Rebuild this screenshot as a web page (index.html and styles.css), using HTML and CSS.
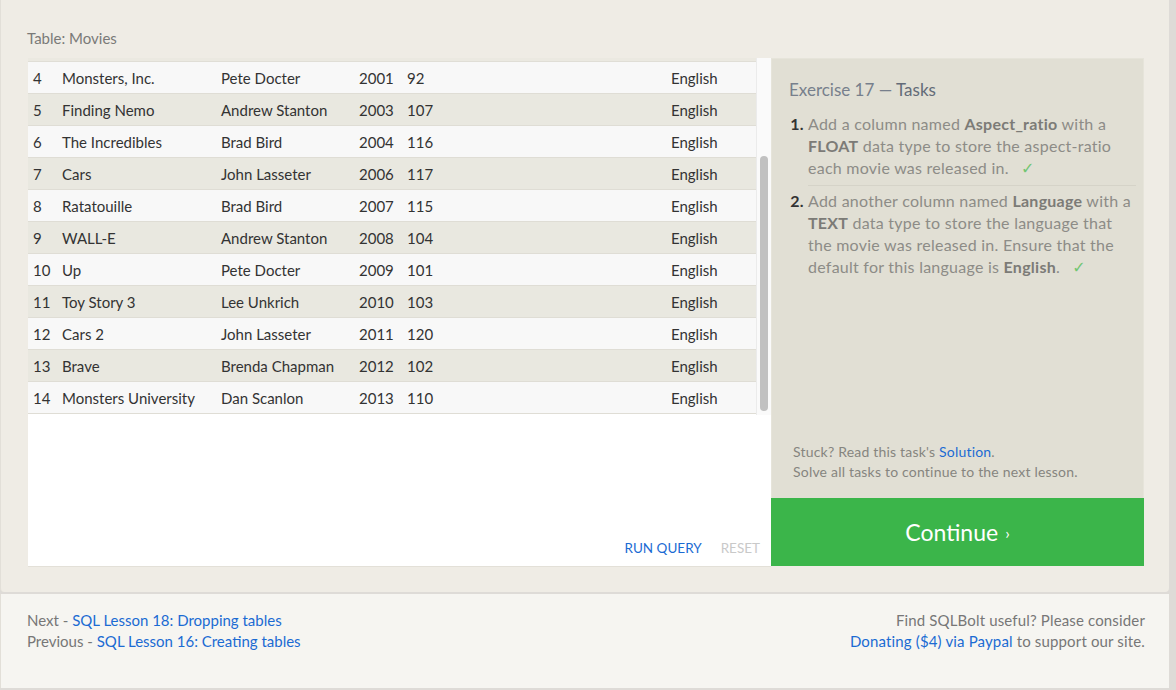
FILE: index.html
```html
<!DOCTYPE html>
<html>
<head>
<meta charset="utf-8">
<link rel="stylesheet" href="styles.css">
</head>
<body>
<div class="main">
  <div class="table-label">Table: Movies</div>
  <div class="layout">
    <div class="results">
      <div class="scroll-wrap">
        <div class="table-area">
          <div class="clip-row"></div>
          <table class="movies">
            <tr class="odd"><td class="c-id">4</td><td class="c-title">Monsters, Inc.</td><td class="c-dir">Pete Docter</td><td class="c-year">2001</td><td class="c-len">92</td><td class="c-lang">English</td></tr>
            <tr class="even"><td class="c-id">5</td><td class="c-title">Finding Nemo</td><td class="c-dir">Andrew Stanton</td><td class="c-year">2003</td><td class="c-len">107</td><td class="c-lang">English</td></tr>
            <tr class="odd"><td class="c-id">6</td><td class="c-title">The Incredibles</td><td class="c-dir">Brad Bird</td><td class="c-year">2004</td><td class="c-len">116</td><td class="c-lang">English</td></tr>
            <tr class="even"><td class="c-id">7</td><td class="c-title">Cars</td><td class="c-dir">John Lasseter</td><td class="c-year">2006</td><td class="c-len">117</td><td class="c-lang">English</td></tr>
            <tr class="odd"><td class="c-id">8</td><td class="c-title">Ratatouille</td><td class="c-dir">Brad Bird</td><td class="c-year">2007</td><td class="c-len">115</td><td class="c-lang">English</td></tr>
            <tr class="even"><td class="c-id">9</td><td class="c-title">WALL-E</td><td class="c-dir">Andrew Stanton</td><td class="c-year">2008</td><td class="c-len">104</td><td class="c-lang">English</td></tr>
            <tr class="odd"><td class="c-id">10</td><td class="c-title">Up</td><td class="c-dir">Pete Docter</td><td class="c-year">2009</td><td class="c-len">101</td><td class="c-lang">English</td></tr>
            <tr class="even"><td class="c-id">11</td><td class="c-title">Toy Story 3</td><td class="c-dir">Lee Unkrich</td><td class="c-year">2010</td><td class="c-len">103</td><td class="c-lang">English</td></tr>
            <tr class="odd"><td class="c-id">12</td><td class="c-title">Cars 2</td><td class="c-dir">John Lasseter</td><td class="c-year">2011</td><td class="c-len">120</td><td class="c-lang">English</td></tr>
            <tr class="even"><td class="c-id">13</td><td class="c-title">Brave</td><td class="c-dir">Brenda Chapman</td><td class="c-year">2012</td><td class="c-len">102</td><td class="c-lang">English</td></tr>
            <tr class="odd"><td class="c-id">14</td><td class="c-title">Monsters University</td><td class="c-dir">Dan Scanlon</td><td class="c-year">2013</td><td class="c-len">110</td><td class="c-lang">English</td></tr>
          </table>
        </div>
        <div class="scroll-track"><div class="scroll-thumb"></div></div>
      </div>
      <div class="actions">
        <span class="run">RUN QUERY</span>
        <span class="reset">RESET</span>
      </div>
    </div>
    <div class="tasks">
      <div class="tasks-body">
        <h2 class="tasks-title">Exercise 17 — <span class="tasks-word">Tasks</span></h2>
        <ol class="task-list">
          <li class="task">Add a column named <b>Aspect_ratio</b> with a <b>FLOAT</b> data type to store the aspect-ratio each movie was released in. <span class="check">✓</span></li>
          <li class="task">Add another column named <b>Language</b> with a <b>TEXT</b> data type to store the language that the movie was released in. Ensure that the default for this language is <b>English</b>. <span class="check">✓</span></li>
        </ol>
      </div>
      <div class="tasks-note">
        <div>Stuck? Read this task's <span class="link">Solution</span>.</div>
        <div>Solve all tasks to continue to the next lesson.</div>
      </div>
      <div class="continue">Continue <span class="chev">›</span></div>
    </div>
  </div>
</div>
<div class="footer">
  <div class="footer-left">
    <div>Next - <span class="link">SQL Lesson 18: Dropping tables</span></div>
    <div>Previous - <span class="link">SQL Lesson 16: Creating tables</span></div>
  </div>
  <div class="footer-right">
    <div>Find SQLBolt useful? Please consider</div>
    <div><span class="link">Donating ($4) via Paypal</span> to support our site.</div>
  </div>
</div>
</body>
</html>
```

FILE: styles.css
```css
html, body {
  margin: 0;
  padding: 0;
}
body {
  background: #dedbd7;
  font-family: Lato, "Open Sans", sans-serif;
  color: #333;
  width: 1176px;
  height: 690px;
  overflow: hidden;
}
.main {
  width: 1169px;
  height: 592px;
  box-sizing: border-box;
  background: #efece5;
  border-left: 1px solid #e2dfd8;
  border-radius: 0 0 4px 4px;
  padding: 28px 0 0 27px;
}
.table-label {
  font-size: 15px;
  line-height: 20px;
  color: #7a7a78;
  height: 30px;
  margin-left: -1px;
}
.layout {
  display: flex;
  height: 508px;
}
.results {
  width: 743px;
  background: #fff;
  display: flex;
  flex-direction: column;
  box-shadow: 0 1px 0 #e3e0d8;
}
.scroll-wrap {
  display: flex;
  height: 357px;
}
.table-area {
  width: 729px;
  border-right: 1px solid #ebebeb;
  box-sizing: border-box;
}
.clip-row {
  height: 3px;
  background: #ebe9e1;
  border-bottom: 1px solid #e0ded6;
}
.movies {
  border-collapse: collapse;
  width: 100%;
  font-size: 15px;
  color: #333;
}
.movies tr.odd { background: #f8f8f8; }
.movies tr.even { background: #e9e8e0; }
.movies td {
  height: 31px;
  padding: 0;
  border-bottom: 1px solid #dfddd5;
  white-space: nowrap;
}
.c-id { width: 29px; padding-left: 5px !important; }
.c-title { width: 159px; }
.c-dir { width: 138px; }
.c-year { width: 48px; }
.c-len { width: 264px; }
.scroll-track {
  width: 14px;
  background: #fafafa;
  padding: 98px 3px 0 3px;
  box-sizing: border-box;
}
.scroll-thumb {
  width: 8px;
  height: 255px;
  background: #c1c1c1;
  border-radius: 4px;
}
.actions {
  flex: 1;
  display: flex;
  justify-content: flex-end;
  align-items: flex-end;
  gap: 19px;
  padding: 0 11px 10px 0;
  font-size: 13.5px;
  line-height: 16px;
}
.run { color: #1b6bd3; }
.reset { color: #c9c9c9; }
.tasks {
  width: 373px;
  background: #e1dfd4;
  border: 1px solid #e6e4da;
  border-bottom: none;
  box-sizing: border-box;
  display: flex;
  flex-direction: column;
}
.tasks-body {
  flex: 1;
  padding: 20px 7px 0 17px;
}
.tasks-title {
  margin: 0 0 12px 0;
  font-size: 17px;
  font-weight: normal;
  line-height: 22px;
  color: #777f8c;
}
.tasks-word {
  color: #636b78;
}
.task-list {
  margin: 0;
  padding: 0 0 0 19px;
  font-size: 16px;
  letter-spacing: 0.25px;
  line-height: 22px;
  color: #8d8c87;
}
.task-list li::marker {
  color: #333;
  font-weight: bold;
}
.task-list b {
  color: #7c7b77;
}
.task {
  padding-bottom: 5px;
}
.task + .task {
  border-top: 1px solid #d5d3c8;
  padding-top: 4px;
}
.check {
  color: #72c672;
  margin-left: 8px;
  font-family: "DejaVu Sans", sans-serif;
  font-size: 16px;
}
.tasks-note {
  padding: 0 20px 16px 21px;
  font-size: 14px;
  letter-spacing: 0.2px;
  line-height: 20px;
  color: #86857f;
}
.link { color: #1b6bd3; }
.continue {
  height: 68px;
  background: #3bb54a;
  color: #fff;
  font-size: 23px;
  display: flex;
  align-items: center;
  justify-content: center;
  margin: 0 -1px;
}
.chev {
  font-size: 16px;
  margin-left: 7px;
}
.footer {
  margin-top: 2px;
  width: 1169px;
  height: 94px;
  box-sizing: border-box;
  background: #f6f5f1;
  border-left: 1px solid #e2dfd8;
  display: flex;
  justify-content: space-between;
  padding: 16px 24px 0 26px;
  font-size: 15px;
  line-height: 21px;
  color: #777;
}
.footer-right {
  text-align: right;
  letter-spacing: 0.15px;
}
```
